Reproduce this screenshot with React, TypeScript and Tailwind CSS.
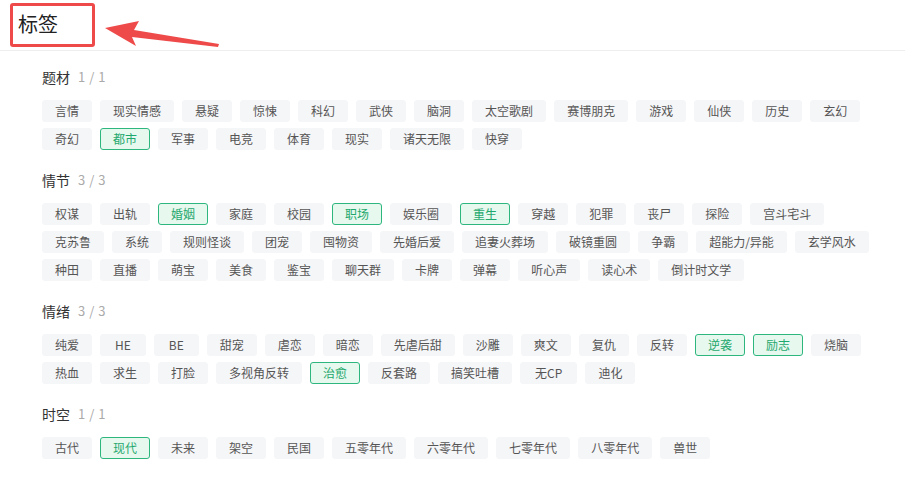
const sections: { title: string; count: string; tags: string[]; active: string[] }[] = [
  {
    title: '题材',
    count: '1 / 1',
    tags: ['言情', '现实情感', '悬疑', '惊悚', '科幻', '武侠', '脑洞', '太空歌剧', '赛博朋克', '游戏', '仙侠', '历史', '玄幻', '奇幻', '都市', '军事', '电竞', '体育', '现实', '诸天无限', '快穿'],
    active: ['都市'],
  },
  {
    title: '情节',
    count: '3 / 3',
    tags: ['权谋', '出轨', '婚姻', '家庭', '校园', '职场', '娱乐圈', '重生', '穿越', '犯罪', '丧尸', '探险', '宫斗宅斗', '克苏鲁', '系统', '规则怪谈', '团宠', '囤物资', '先婚后爱', '追妻火葬场', '破镜重圆', '争霸', '超能力/异能', '玄学风水', '种田', '直播', '萌宝', '美食', '鉴宝', '聊天群', '卡牌', '弹幕', '听心声', '读心术', '倒计时文学'],
    active: ['婚姻', '职场', '重生'],
  },
  {
    title: '情绪',
    count: '3 / 3',
    tags: ['纯爱', 'HE', 'BE', '甜宠', '虐恋', '暗恋', '先虐后甜', '沙雕', '爽文', '复仇', '反转', '逆袭', '励志', '烧脑', '热血', '求生', '打脸', '多视角反转', '治愈', '反套路', '搞笑吐槽', '无CP', '迪化'],
    active: ['逆袭', '励志', '治愈'],
  },
  {
    title: '时空',
    count: '1 / 1',
    tags: ['古代', '现代', '未来', '架空', '民国', '五零年代', '六零年代', '七零年代', '八零年代', '兽世'],
    active: ['现代'],
  },
];

function Tag({ label, active }: { label: string; active: boolean }) {
  // latin letters render a bit wider in the original font
  const latin = /[A-Za-z]/.test(label);
  return (
    <span
      className={
        (latin ? 'px-[14px] ' : 'px-[12px] ') +
        (active
          ? 'h-[22px] flex items-center rounded-[3px] border border-[#2db77f] bg-[#e7f8ef] text-[#1fa86d] text-[12px]'
          : 'h-[22px] flex items-center rounded-[3px] border border-[#f5f6f8] bg-[#f5f6f8] text-[#555] text-[12px]')
      }
    >
      {label}
    </span>
  );
}

export default function App() {
  return (
    <div
      className="w-[905px] h-[485px] bg-white relative overflow-hidden"
      style={{ fontFamily: '"Noto Sans CJK SC", "Noto Sans", sans-serif' }}
    >
      <div className="h-[51px] border-b border-[#eeeeee] pl-[18px] flex items-center">
        <span className="text-[20px] text-[#222] leading-none pb-[3px]">标签</span>
      </div>

      {/* annotation overlay */}
      <div className="absolute left-[10px] top-[3px] w-[85px] h-[44px] border-[3px] border-[#ef4a4a] rounded-[3px]" />
      <svg className="absolute left-0 top-0" width="240" height="60" viewBox="0 0 240 60">
        <polygon points="105,28 139,21 134,30 219,44 218,47 132,37 136,46" fill="#ef4a4a" />
      </svg>

      <div className="pl-[42px] pr-[25px] pt-[16px] flex flex-col gap-[20px]">
        {sections.map((section) => (
          <div key={section.title}>
            <div className="h-[20px] flex items-center gap-[8px] mb-[13px]">
              <span className="text-[14px] text-[#333]">{section.title}</span>
              <span className="text-[13px] text-[#aaa] tracking-[0.5px]">{section.count}</span>
            </div>
            <div className="flex flex-wrap gap-x-[8px] gap-y-[6px]">
              {section.tags.map((tag) => (
                <Tag key={tag} label={tag} active={section.active.includes(tag)} />
              ))}
            </div>
          </div>
        ))}
      </div>
    </div>
  );
}
